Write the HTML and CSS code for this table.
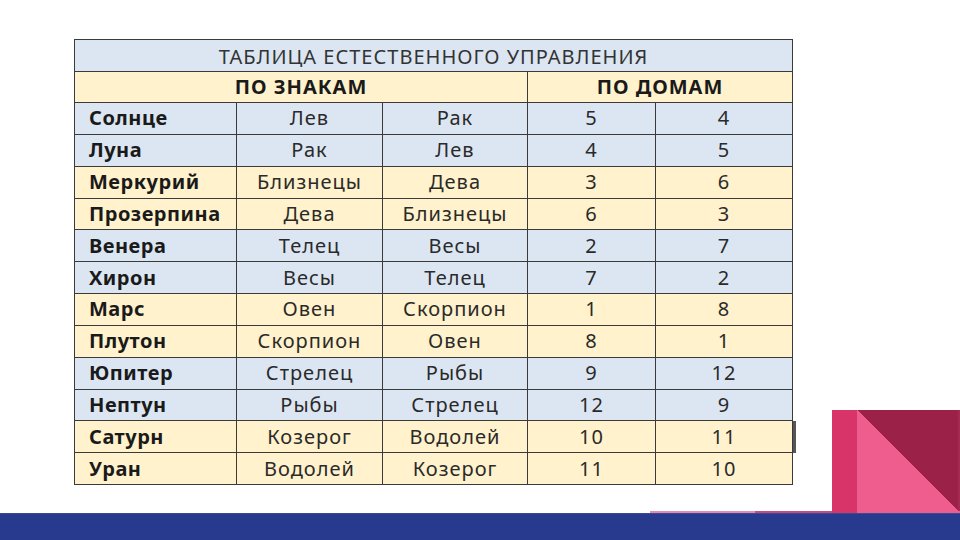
FILE: index.html
```html
<!DOCTYPE html>
<html lang="ru">
<head>
<meta charset="utf-8">
<title>Таблица естественного управления</title>
<link rel="stylesheet" href="styles.css">
</head>
<body>
<div class="page">
  <div class="main">
    <table class="rule">
      <colgroup>
        <col class="c1"><col class="c2"><col class="c3"><col class="c4"><col class="c5">
      </colgroup>
      <tr class="title blue"><td colspan="5">ТАБЛИЦА ЕСТЕСТВЕННОГО УПРАВЛЕНИЯ</td></tr>
      <tr class="head yellow"><td colspan="3">ПО ЗНАКАМ</td><td colspan="2">ПО ДОМАМ</td></tr>
      <tr class="blue"><td class="name">Солнце</td><td>Лев</td><td>Рак</td><td>5</td><td>4</td></tr>
      <tr class="blue"><td class="name">Луна</td><td>Рак</td><td>Лев</td><td>4</td><td>5</td></tr>
      <tr class="yellow"><td class="name">Меркурий</td><td>Близнецы</td><td>Дева</td><td>3</td><td>6</td></tr>
      <tr class="yellow"><td class="name">Прозерпина</td><td>Дева</td><td>Близнецы</td><td>6</td><td>3</td></tr>
      <tr class="blue"><td class="name">Венера</td><td>Телец</td><td>Весы</td><td>2</td><td>7</td></tr>
      <tr class="blue"><td class="name">Хирон</td><td>Весы</td><td>Телец</td><td>7</td><td>2</td></tr>
      <tr class="yellow"><td class="name">Марс</td><td>Овен</td><td>Скорпион</td><td>1</td><td>8</td></tr>
      <tr class="yellow"><td class="name">Плутон</td><td>Скорпион</td><td>Овен</td><td>8</td><td>1</td></tr>
      <tr class="blue"><td class="name">Юпитер</td><td>Стрелец</td><td>Рыбы</td><td>9</td><td>12</td></tr>
      <tr class="blue"><td class="name">Нептун</td><td>Рыбы</td><td>Стрелец</td><td>12</td><td>9</td></tr>
      <tr class="yellow"><td class="name">Сатурн</td><td>Козерог</td><td>Водолей</td><td>10</td><td class="edge">11</td></tr>
      <tr class="yellow"><td class="name">Уран</td><td>Водолей</td><td>Козерог</td><td>11</td><td>10</td></tr>
    </table>
    <div class="spacer"></div>
    <div class="deco">
      <div class="deco-stripe"></div>
      <div class="deco-tri"></div>
    </div>
  </div>
  <div class="strip">
    <div class="strip-gap"></div>
    <div class="strip-a"></div>
    <div class="strip-b"></div>
    <div class="strip-c"></div>
    <div class="strip-d"></div>
  </div>
  <div class="bar"></div>
</div>
</body>
</html>
```
FILE: styles.css
```css
html, body {
  margin: 0;
  padding: 0;
  background: #ffffff;
}
.page {
  width: 960px;
  height: 540px;
  display: flex;
  flex-direction: column;
  overflow: hidden;
  font-family: "Noto Sans", "Open Sans", "Liberation Sans", sans-serif;
}
.main {
  flex: 1;
  display: flex;
  align-items: flex-start;
  padding: 39px 0 0 74px;
  min-height: 0;
}
.rule {
  border-collapse: collapse;
  table-layout: fixed;
  width: 718px;
  flex: none;
}
.c1 { width: 162px; }
.c2 { width: 146px; }
.c3 { width: 145px; }
.c4 { width: 128px; }
.c5 { width: 137px; }
.rule td {
  border: 1.5px solid #3a3a3a;
  height: 30.85px;
  padding: 0;
  text-align: center;
  vertical-align: middle;
  font-size: 20px;
  letter-spacing: 1px;
  color: #2a2a2a;
  white-space: nowrap;
  line-height: 1;
}
.rule .blue td { background: #dce6f2; }
.rule .yellow td { background: #fff2cc; }
.rule .title td {
  height: 29px;
  color: #333333;
  padding-top: 2px;
}
.rule .head td {
  height: 30px;
  font-weight: 700;
  color: #1a1a1a;
}
.rule td.name {
  text-align: left;
  padding-left: 14px;
  font-weight: 700;
  letter-spacing: 0.5px;
  color: #1a1a1a;
}
.rule td.edge {
  box-shadow: 3px 0 0 #555555;
}
.spacer { flex: 1; }
.deco {
  align-self: flex-end;
  display: flex;
  width: 128px;
  height: 101px;
  flex: none;
}
.deco-stripe {
  width: 25px;
  background: #d8346a;
}
.deco-tri {
  flex: 1;
  background: linear-gradient(to top right, #ee5d8d 50%, #9b2148 50%);
  background-size: 103px 103px;
  background-position: 0 0;
  border-right: 2px solid #a52a52;
}
.strip {
  height: 2px;
  display: flex;
  flex: none;
}
.strip-gap { width: 650px; }
.strip-a { width: 105px; background: #e58ab0; }
.strip-b { width: 77px; background: #c84a7e; }
.strip-c { width: 25px; background: #d8346a; }
.strip-d { flex: 1; background: #ee5d8d; }
.bar {
  height: 27px;
  flex: none;
  background: #283a8e;
  border-top: 1px solid #3a4a98;
  box-sizing: border-box;
}
```
